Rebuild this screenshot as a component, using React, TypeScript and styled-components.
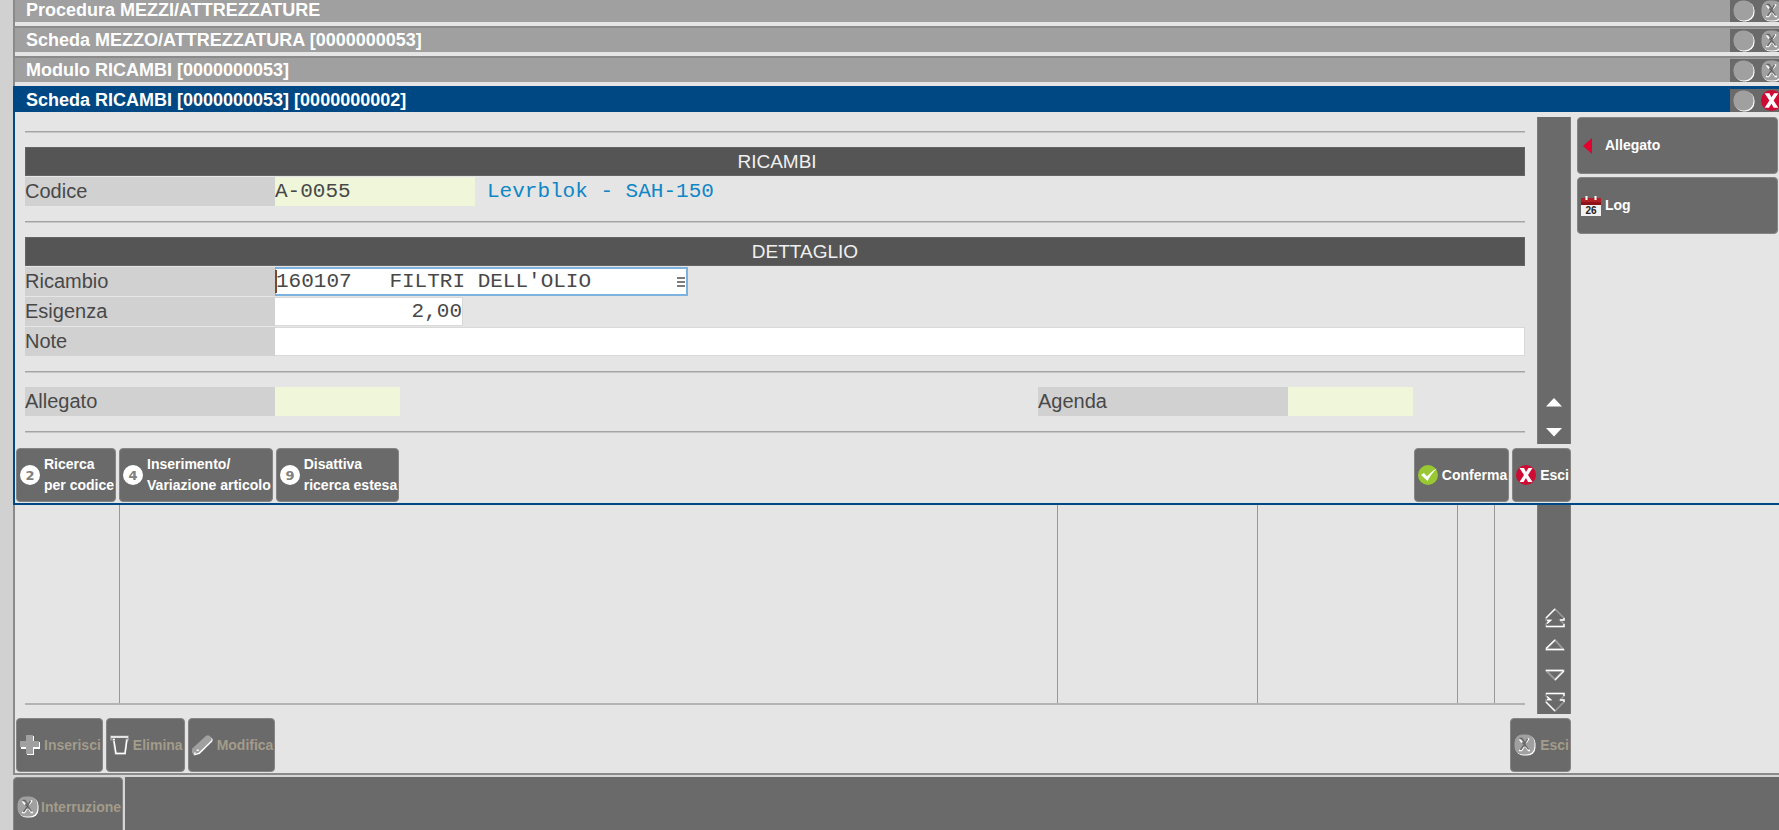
import React from "react";
import styled, { createGlobalStyle, css } from "styled-components";

const c = {
  page: "#d1d1d1",
  panel: "#e5e5e5",
  dark: "#6a6a6a",
  header: "#555555",
  blue: "#004883",
  frame: "#8a8a8a",
  title: "#a0a0a0",
  label: "#d1d1d1",
  text: "#484848",
  mist: "#f0f6da",
  rule: "#a4a4a4",
};

const sans = `"Liberation Sans", Arial, sans-serif`;
const mono = `"Liberation Mono", "Courier New", monospace`;

const Global = createGlobalStyle`
  * { box-sizing: border-box; }
  html, body, #root { height: 100%; }
  body { margin: 0; background: ${c.page}; font-family: ${sans}; color: ${c.text}; overflow: hidden; }
`;

const Shell = styled.div`
  display: flex;
  flex-direction: column;
  min-height: 100%;
  padding-left: 13px;
`;

const TitleBar = styled.header<{ $active?: boolean; $first?: boolean }>`
  display: flex;
  align-items: flex-end;
  height: ${(p) => (p.$first ? 22 : 26)}px;
  overflow: hidden;
  background: ${(p) => (p.$active ? c.blue : c.title)};
  border-top: ${(p) => (p.$first || p.$active ? "0" : `2px solid ${c.frame}`)};
`;

const TitleFrame = styled.div`
  border-left: 2px solid ${c.frame};
  background: ${c.panel};
  padding-bottom: 4px;
`;

const TitleText = styled.h1`
  flex: 1;
  margin: 0;
  padding-left: 11px;
  font-size: 18px;
  line-height: 24px;
  font-weight: 700;
  color: #fff;
  white-space: nowrap;
`;

const TitleControls = styled.div`
  display: flex;
  gap: 6px;
  width: 49px;
  padding-left: 3px;
  overflow: hidden;
  background: ${c.dark};
`;

const TitleButton = styled.button`
  flex: none;
  display: flex;
  align-items: center;
  width: 22px;
  height: 23px;
  padding: 0;
  border: 0;
  background: none;
`;

const ActiveWindow = styled.section`
  border-left: 2px solid ${c.blue};
  border-bottom: 2px solid ${c.blue};
  background: ${c.panel};
`;

const BackWindow = styled.section`
  flex: 1;
  display: flex;
  border-left: 2px solid ${c.frame};
  border-bottom: 2px solid ${c.frame};
  background: ${c.panel};
`;

const WindowBody = styled.div`
  display: flex;
  padding-top: 5px;
`;

const MainColumn = styled.div`
  flex: 1;
  min-width: 0;
  display: flex;
  flex-direction: column;
`;

const SideColumn = styled.aside`
  width: 208px;
  flex: none;
  display: flex;
  flex-direction: column;
  gap: 3px;
  padding: 0 1px 0 6px;
`;

const Content = styled.div<{ $grow?: boolean }>`
  display: flex;
  flex: ${(p) => (p.$grow ? 1 : "none")};
`;

const Form = styled.form`
  flex: 1;
  min-width: 0;
  padding: 0 12px 0 10px;
`;

const Rule = styled.hr`
  height: 2px;
  margin: 14px 0;
  border: 0;
  border-top: 1px solid ${c.rule};
  border-bottom: 1px solid #c6c6c6;
`;

const SectionHeader = styled.h2<{ $indent: number }>`
  height: 29px;
  margin: 0 0 1px;
  padding-left: ${(p) => p.$indent}px;
  font-size: 19px;
  line-height: 27px;
  font-weight: 400;
  text-align: center;
  color: #f0f0f0;
  background: ${c.header};
  border: 1px solid #646464;
`;

const Row = styled.div`
  display: flex;
  align-items: flex-start;
  height: 30px;
`;

const Label = styled.label`
  flex: none;
  width: 250px;
  height: 29px;
  font-size: 20px;
  line-height: 29px;
  background: ${c.label};
`;

const fieldWidths = { xs: "125px", sm: "188px", md: "200px", lg: "413px", full: "100%" };
type Size = keyof typeof fieldWidths;

const FieldInput = styled.input<{ $size: Size; $tone?: "mist" | "focus" | "plain"; $right?: boolean }>`
  display: block;
  width: ${(p) => fieldWidths[p.$size]};
  height: 29px;
  padding: 0;
  font-family: ${mono};
  font-size: 21px;
  line-height: 25px;
  color: ${c.text};
  text-align: ${(p) => (p.$right ? "right" : "left")};
  border-radius: 0;
  outline: 0;
  ${(p) =>
    p.$tone === "mist"
      ? css`border: 0; background: ${c.mist};`
      : p.$tone === "focus"
      ? css`border: 2px solid #7db1de; border-left-width: 1px; background: #fff;`
      : css`border: 1px solid #d9d9d9; border-left-width: 0; background: #fff;`}
`;

const FieldWrap = styled.div<{ $grow?: boolean }>`
  position: relative;
  flex: ${(p) => (p.$grow ? 1 : "none")};
`;

const Caret = styled.span`
  position: absolute;
  left: 0;
  top: 3px;
  width: 2px;
  height: 23px;
  background: #7c4a2a;
`;

const LookupButton = styled.button`
  position: absolute;
  right: 2px;
  top: 2px;
  display: flex;
  align-items: center;
  width: 9px;
  height: 25px;
  padding: 0;
  border: 0;
  background: none;
`;

const Description = styled.output`
  padding-left: 12px;
  font-family: ${mono};
  font-size: 21px;
  line-height: 29px;
  color: #0f86c6;
  white-space: pre;
`;

const RightGroup = styled.div`
  display: flex;
  margin-left: auto;
  padding-right: 112px;
`;

const ScrollRail = styled.div<{ $gap: number; $end: number }>`
  flex: none;
  width: 34px;
  display: flex;
  flex-direction: column;
  align-items: center;
  justify-content: flex-end;
  gap: ${(p) => p.$gap}px;
  margin-bottom: 3px;
  padding-bottom: ${(p) => p.$end}px;
  background: ${c.dark};
  border: 1px solid #7c7c7c;
  border-width: 0 1px;
`;

const RailGroup = styled.div`
  display: flex;
  flex-direction: column;
  gap: 11px;
  padding-left: 2px;
`;

const RailButton = styled.button`
  display: flex;
  padding: 0;
  border: 0;
  background: none;
`;

const Toolbar = styled.div`
  display: flex;
  gap: 3px;
  padding: 1px 0 1px 1px;
`;

const Spacer = styled.span`
  flex: 1;
`;

const Button = styled.button<{ $side?: boolean; $muted?: boolean }>`
  display: flex;
  align-items: center;
  gap: 4px;
  height: ${(p) => (p.$side ? 57 : 54)}px;
  padding: 0 1px 0 3px;
  font-family: ${sans};
  font-size: 14px;
  line-height: 21px;
  font-weight: 700;
  text-align: left;
  white-space: pre;
  color: ${(p) => (p.$muted ? "#a39c8a" : "#fff")};
  background: ${c.dark};
  border: 1px solid #858585;
  border-radius: 4px;
  svg { flex: none; }
`;

const EmptyTable = styled.table`
  flex: 1;
  align-self: stretch;
  margin: 0 12px 12px 10px;
  table-layout: fixed;
  border-collapse: collapse;
  border-bottom: 2px solid #b4b4b4;
`;

const Cell = styled.td<{ $w?: number }>`
  width: ${(p) => (p.$w ? `${p.$w}px` : "auto")};
  padding: 0;
  & + & { border-left: 1px solid #999; }
`;

const StatusBar = styled.footer`
  display: flex;
  gap: 2px;
  height: 55px;
  padding-top: 2px;
  background: #d6d6d6;
`;

const StatusFill = styled.div`
  flex: 1;
  background: ${c.dark};
`;

const StatusButton = styled(Button)`
  height: 60px;
  flex: none;
  gap: 2px;
`;

const StatusClip = styled.div`
  display: flex;
  overflow: hidden;
`;

const DiscIcon = () => (
  <svg width="22" height="22" viewBox="0 0 22 22" aria-hidden="true">
    <rect x="1.500" y="1.500" width="20" height="20" rx="9" fill="#fff" />
    <rect x="0.500" y="0.500" width="20" height="20" rx="9" fill="#a0a0a0" />
  </svg>
);

const MutedCloseIcon = () => (
  <svg width="22" height="22" viewBox="0 0 22 22" aria-hidden="true">
    <rect x="1.500" y="1.500" width="20" height="20" rx="8" fill="#fff" />
    <rect x="0.500" y="0.500" width="20" height="20" rx="8" fill="#a0a0a0" />
    <path d="M5 16.500h2.500l2.500-4M12 8.500l3-4M5.500 5l2.500 3.500M12 13l2.500 3.500H16" fill="none" stroke="#fff" strokeWidth="1.600" />
    <path d="M5.500 4.500H8l3 4.500 2.500-4M8.500 8.500l2 2-4 5.500M11 10.500l3.500 5" fill="none" stroke="#636363" strokeWidth="1.300" />
  </svg>
);

const CloseIcon = ({ size = 20 }: { size?: number }) => (
  <svg width={size} height={size} viewBox="0 0 20 20" aria-hidden="true">
    <circle cx="10" cy="10" r="10" fill="#cf0a33" />
    <path d="M3.500 3H8l2 4 2.500-4h4L12 10l4.500 7H12l-2-4-2.500 4h-4L8 10z" fill="#fff" />
  </svg>
);

const CheckIcon = () => (
  <svg width="20" height="20" viewBox="0 0 20 20" aria-hidden="true">
    <circle cx="10" cy="10" r="10" fill="#98c832" />
    <path d="M3 10l3-2 3 3.500C12 8 15 5.500 19 3.500 15 7 12 11 9.500 16z" fill="#fff" />
  </svg>
);

const DigitIcon = ({ n }: { n: string }) => (
  <svg width="20" height="20" viewBox="0 0 20 20" aria-hidden="true">
    <circle cx="10" cy="10" r="10" fill="#fff" />
    <text x="10" y="15" textAnchor="middle" fontFamily="DejaVu Sans" fontWeight="700" fontSize="13" fill="#808080">
      {n}
    </text>
  </svg>
);

const LeftIcon = () => (
  <svg width="20" height="20" viewBox="0 0 20 20" aria-hidden="true">
    <path d="M2 10 11 2v16z" fill="#e4002f" />
  </svg>
);

const CalendarIcon = () => (
  <svg width="20" height="20" viewBox="0 0 20 20" aria-hidden="true">
    <rect y="8" width="20" height="12" fill="#f2f0f0" />
    <rect y="2" width="20" height="7" fill="#b01f24" />
    <path d="M0 6h20v3H0z" fill="#8e1216" />
    <path d="M5.500 0v4M14.500 0v4" stroke="#fff" strokeWidth="2" />
    <text x="10" y="17.500" textAnchor="middle" fontFamily="Liberation Sans" fontWeight="700" fontSize="10" fill="#222">
      26
    </text>
  </svg>
);

const PlusIcon = () => (
  <svg width="20" height="22" viewBox="0 0 20 22" aria-hidden="true">
    <path d="M7 2h7v6h6v7h-6v6H7v-6H1V8h6z" fill="#fff" />
    <path d="M6 1h7v6h6v6h-6v7H6v-7H0V7h6z" fill="#a0a0a0" />
  </svg>
);

const BinIcon = () => (
  <svg width="19" height="20" viewBox="0 0 19 20" aria-hidden="true">
    <path d="M1 1.500h17v3h-1.500L15 18.500H5.500L3.500 4.500H1z" fill="none" stroke="#999" strokeWidth="2" />
    <path d="M1 2h17M17 4.500 15 18.500H6L4 6M3 4.500h2" fill="none" stroke="#fff" strokeWidth="1.500" />
  </svg>
);

const PencilIcon = () => (
  <svg width="21" height="22" viewBox="0 0 22 22" aria-hidden="true">
    <path d="M17 1.500 21.500 4.500V7L8 20.500 2 22l-1-5z" fill="#fff" />
    <path d="M15 1h3l2.500 2.500V6L7 19l-5 2-2-2v-4z" fill="#a0a0a0" />
    <path d="M2 19.500h2M5 16.500h2" stroke="#fff" strokeWidth="1.500" />
  </svg>
);

const TriangleIcon = ({ down }: { down?: boolean }) => (
  <svg width="16" height="9" viewBox="0 0 16 9" aria-hidden="true">
    <path d={down ? "M0 0h16L8 8.500z" : "M0 8.500h16L8 0z"} fill="#fff" />
  </svg>
);

const OutlineTriangleIcon = ({ down }: { down?: boolean }) => (
  <svg width="20" height="12" viewBox="0 0 20 12" aria-hidden="true">
    <g fill="none">
      <path d={down ? "M1 1.500h17.500L10 10.500z" : "M1 10.500h17.500L10 1z"} stroke="#999" strokeWidth="2" />
      <path d={down ? "M1 1.500h17.500M19 2l-9 9" : "M1 10.500h18M1 9.500 10 1"} stroke="#fff" strokeWidth="1.300" />
    </g>
  </svg>
);

const OutlineDoubleIcon = ({ down }: { down?: boolean }) => (
  <svg width="20" height="20" viewBox="0 0 20 20" aria-hidden="true">
    <g fill="none" transform={down ? "matrix(1 0 0 -1 0 20)" : undefined}>
      <path d="M1 18.500h18V16l-4-4h4v-2l-9-9-9 9v2h4l-4 4z" stroke="#999" strokeWidth="1.600" />
      <path d="M1 18.500h18V16M19 10v2h-4M1 10l9-9M2 12.500h3.500L2 15.500" stroke="#fff" strokeWidth="1.400" />
    </g>
  </svg>
);

const LookupIcon = () => (
  <svg width="8" height="12" viewBox="0 0 8 12" aria-hidden="true">
    <path d="M0 2h8M0 6h8M0 10h8" stroke="#7c7c7c" strokeWidth="2" />
  </svg>
);

type TitleProps = { text: string; active?: boolean; first?: boolean };

const Title = ({ text, active, first }: TitleProps) => (
  <TitleBar $active={active} $first={first}>
    <TitleText>{text}</TitleText>
    <TitleControls>
      <TitleButton type="button" aria-label="Riduci"><DiscIcon /></TitleButton>
      <TitleButton type="button" aria-label="Chiudi">{active ? <CloseIcon size={21} /> : <MutedCloseIcon />}</TitleButton>
    </TitleControls>
  </TitleBar>
);

export default function App() {
  return (
    <>
      <Global />
      <Shell>
        <TitleFrame><Title first text="Procedura MEZZI/ATTREZZATURE" /></TitleFrame>
        <TitleFrame><Title text="Scheda MEZZO/ATTREZZATURA [0000000053]" /></TitleFrame>
        <TitleFrame><Title text="Modulo RICAMBI [0000000053]" /></TitleFrame>

        <ActiveWindow>
          <Title active text="Scheda RICAMBI [0000000053] [0000000002]" />
          <WindowBody>
            <MainColumn>
              <Content>
                <Form>
                  <Rule />
                  <SectionHeader $indent={4}>RICAMBI</SectionHeader>
                  <Row>
                    <Label htmlFor="codice">Codice</Label>
                    <FieldWrap>
                      <FieldInput id="codice" $size="md" $tone="mist" readOnly value="A-0055" />
                    </FieldWrap>
                    <Description htmlFor="codice">Levrblok - SAH-150</Description>
                  </Row>
                  <Rule />
                  <SectionHeader $indent={60}>DETTAGLIO</SectionHeader>
                  <Row>
                    <Label htmlFor="ricambio">Ricambio</Label>
                    <FieldWrap>
                      <FieldInput id="ricambio" $size="lg" $tone="focus" defaultValue="160107   FILTRI DELL'OLIO" />
                      <Caret />
                      <LookupButton type="button" aria-label="Cerca ricambio"><LookupIcon /></LookupButton>
                    </FieldWrap>
                  </Row>
                  <Row>
                    <Label htmlFor="esigenza">Esigenza</Label>
                    <FieldWrap>
                      <FieldInput id="esigenza" $size="sm" $right defaultValue="2,00" />
                    </FieldWrap>
                  </Row>
                  <Row>
                    <Label htmlFor="note">Note</Label>
                    <FieldWrap $grow>
                      <FieldInput id="note" $size="full" />
                    </FieldWrap>
                  </Row>
                  <Rule />
                  <Row>
                    <Label htmlFor="allegato">Allegato</Label>
                    <FieldInput id="allegato" $size="xs" $tone="mist" readOnly />
                    <RightGroup>
                      <Label htmlFor="agenda">Agenda</Label>
                      <FieldInput id="agenda" $size="xs" $tone="mist" readOnly />
                    </RightGroup>
                  </Row>
                  <Rule />
                </Form>
                <ScrollRail $gap={21} $end={7}>
                  <RailButton type="button" aria-label="Su"><TriangleIcon /></RailButton>
                  <RailButton type="button" aria-label="Giù"><TriangleIcon down /></RailButton>
                </ScrollRail>
              </Content>
              <Toolbar>
                <Button type="button"><DigitIcon n="2" />{"Ricerca\nper codice"}</Button>
                <Button type="button"><DigitIcon n="4" />{"Inserimento/\nVariazione articolo"}</Button>
                <Button type="button"><DigitIcon n="9" />{"Disattiva\nricerca estesa"}</Button>
                <Spacer />
                <Button type="button"><CheckIcon />Conferma</Button>
                <Button type="button"><CloseIcon />Esci</Button>
              </Toolbar>
            </MainColumn>
            <SideColumn>
              <Button type="button" $side><LeftIcon />Allegato</Button>
              <Button type="button" $side><CalendarIcon />Log</Button>
            </SideColumn>
          </WindowBody>
        </ActiveWindow>

        <BackWindow>
          <MainColumn>
            <Content $grow>
              <EmptyTable aria-label="Elenco ricambi">
                <tbody>
                  <tr>
                    <Cell $w={94} />
                    <Cell />
                    <Cell $w={200} />
                    <Cell $w={200} />
                    <Cell $w={37} />
                    <Cell $w={31} />
                  </tr>
                </tbody>
              </EmptyTable>
              <ScrollRail $gap={18} $end={2}>
                <RailGroup>
                  <RailButton type="button" aria-label="Inizio"><OutlineDoubleIcon /></RailButton>
                  <RailButton type="button" aria-label="Riga su"><OutlineTriangleIcon /></RailButton>
                </RailGroup>
                <RailGroup>
                  <RailButton type="button" aria-label="Riga giù"><OutlineTriangleIcon down /></RailButton>
                  <RailButton type="button" aria-label="Fine"><OutlineDoubleIcon down /></RailButton>
                </RailGroup>
              </ScrollRail>
            </Content>
            <Toolbar>
              <Button type="button" $muted><PlusIcon />Inserisci</Button>
              <Button type="button" $muted><BinIcon />Elimina</Button>
              <Button type="button" $muted><PencilIcon />Modifica</Button>
              <Spacer />
              <Button type="button" $muted><MutedCloseIcon />Esci</Button>
            </Toolbar>
          </MainColumn>
          <SideColumn />
        </BackWindow>

        <StatusBar>
          <StatusClip>
            <StatusButton type="button" $muted><MutedCloseIcon />Interruzione</StatusButton>
          </StatusClip>
          <StatusFill />
        </StatusBar>
      </Shell>
    </>
  );
}
